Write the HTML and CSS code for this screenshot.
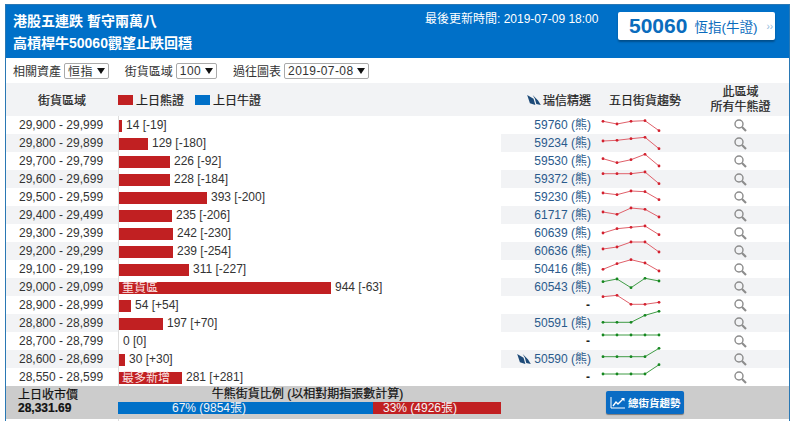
FILE: index.html
```html
<!DOCTYPE html>
<html lang="zh-Hant">
<head>
    <meta charset="UTF-8">
    <title>牛熊街貨圖</title>
    <link rel="stylesheet" href="styles.css">
</head>
<body>
    <svg class="defs" width="0" height="0">
        <defs>
            <marker id="dot-red" markerUnits="userSpaceOnUse" markerWidth="4" markerHeight="4" refX="2" refY="2"><circle cx="2" cy="2" r="1.4" fill="#d3202e"/></marker>
            <marker id="dot-green" markerUnits="userSpaceOnUse" markerWidth="4" markerHeight="4" refX="2" refY="2"><circle cx="2" cy="2" r="1.4" fill="#15871f"/></marker>
            <symbol id="sail" viewBox="0 0 15 11"><path d="M0 0 L7 4 L9 11 L3 9 Z M6 0 L12 6 L15 11 L10 10 L8.5 4 Z"/></symbol>
            <symbol id="lens" viewBox="0 0 13 13"><circle cx="5" cy="5" r="4" fill="none" stroke="#8c8c8c" stroke-width="1.4"/><path d="M8 8 L12 12" stroke="#8c8c8c" stroke-width="2.2"/></symbol>
        </defs>
    </svg>

    <div class="board">
        <div class="top">
            <h1 class="title">港股五連跌 暫守兩萬八<br>高槓桿牛50060觀望止跌回穩</h1>
            <div class="updated">最後更新時間: 2019-07-09 18:00</div>
            <a class="pick-btn"><b>50060</b><span class="pick-name">恆指(牛證)</span><span class="pick-more">››</span></a>
        </div>

        <div class="filters">
            <label>相關資產</label><span class="select">恒指</span>
            <label>街貨區域</label><span class="select">100</span>
            <label>過往圖表</label><span class="select">2019-07-08</span>
        </div>

        <div class="grid head">
            <div class="range-head">街貨區域</div>
            <div class="legend">
                <i class="swatch bear"></i>上日熊證
                <i class="swatch bull"></i>上日牛證
            </div>
            <div class="code-head"><svg class="sail" width="14" height="10"><use href="#sail"/></svg>瑞信精選</div>
            <div class="spark-head">五日街貨趨勢</div>
            <div class="all-head">此區域<br>所有牛熊證</div>
        </div>

        <div class="grid row">
            <div class="range">29,900 - 29,999</div>
            <div class="qty"><span class="bar" style="width:3px"></span>14 [-19]</div>
            <a class="code">59760 (熊)</a>
            <svg class="spark"><polyline class="down" points="3,5.3 17,8 31,5.3 45,4.7 59,14.7"/></svg>
            <svg class="lens"><use href="#lens"/></svg>
        </div>
        <div class="grid row">
            <div class="range">29,800 - 29,899</div>
            <div class="qty"><span class="bar" style="width:29px"></span>129 [-180]</div>
            <a class="code">59234 (熊)</a>
            <svg class="spark"><polyline class="down" points="3,7 17,6.3 31,4.7 45,3.3 59,14.7"/></svg>
            <svg class="lens"><use href="#lens"/></svg>
        </div>
        <div class="grid row">
            <div class="range">29,700 - 29,799</div>
            <div class="qty"><span class="bar" style="width:51px"></span>226 [-92]</div>
            <a class="code">59530 (熊)</a>
            <svg class="spark"><polyline class="down" points="3,6.7 17,10.7 31,7.7 45,2.3 59,14"/></svg>
            <svg class="lens"><use href="#lens"/></svg>
        </div>
        <div class="grid row">
            <div class="range">29,600 - 29,699</div>
            <div class="qty"><span class="bar" style="width:51px"></span>228 [-184]</div>
            <a class="code">59372 (熊)</a>
            <svg class="spark"><polyline class="down" points="3,3.7 17,3.7 31,3.7 45,2 59,13.7"/></svg>
            <svg class="lens"><use href="#lens"/></svg>
        </div>
        <div class="grid row">
            <div class="range">29,500 - 29,599</div>
            <div class="qty"><span class="bar" style="width:88px"></span>393 [-200]</div>
            <a class="code">59230 (熊)</a>
            <svg class="spark"><polyline class="down" points="3,5 17,6.7 31,3 45,3.7 59,11.7"/></svg>
            <svg class="lens"><use href="#lens"/></svg>
        </div>
        <div class="grid row">
            <div class="range">29,400 - 29,499</div>
            <div class="qty"><span class="bar" style="width:53px"></span>235 [-206]</div>
            <a class="code">61717 (熊)</a>
            <svg class="spark"><polyline class="down" points="3,6 17,8.3 31,2 45,3.3 59,11"/></svg>
            <svg class="lens"><use href="#lens"/></svg>
        </div>
        <div class="grid row">
            <div class="range">29,300 - 29,399</div>
            <div class="qty"><span class="bar" style="width:54px"></span>242 [-230]</div>
            <a class="code">60639 (熊)</a>
            <svg class="spark"><polyline class="down" points="3,9 17,4.7 31,3.3 45,2 59,10.7"/></svg>
            <svg class="lens"><use href="#lens"/></svg>
        </div>
        <div class="grid row">
            <div class="range">29,200 - 29,299</div>
            <div class="qty"><span class="bar" style="width:54px"></span>239 [-254]</div>
            <a class="code">60636 (熊)</a>
            <svg class="spark"><polyline class="down" points="3,7 17,5 31,0 45,0 59,10"/></svg>
            <svg class="lens"><use href="#lens"/></svg>
        </div>
        <div class="grid row">
            <div class="range">29,100 - 29,199</div>
            <div class="qty"><span class="bar" style="width:70px"></span>311 [-227]</div>
            <a class="code">50416 (熊)</a>
            <svg class="spark"><polyline class="down" points="3,9.3 17,3.7 31,-0.3 45,3 59,11"/></svg>
            <svg class="lens"><use href="#lens"/></svg>
        </div>
        <div class="grid row">
            <div class="range">29,000 - 29,099</div>
            <div class="qty"><span class="bar tag" style="width:212px">重貨區</span>944 [-63]</div>
            <a class="code">60543 (熊)</a>
            <svg class="spark"><polyline class="up" points="3,3.7 17,1 31,9.7 45,0.3 59,3"/></svg>
            <svg class="lens"><use href="#lens"/></svg>
        </div>
        <div class="grid row">
            <div class="range">28,900 - 28,999</div>
            <div class="qty"><span class="bar" style="width:12px"></span>54 [+54]</div>
            <a class="code none">-</a>
            <svg class="spark"><polyline class="down" points="3,0.7 17,-0.7 31,8.3 45,8.3 59,6.3"/></svg>
            <svg class="lens"><use href="#lens"/></svg>
        </div>
        <div class="grid row">
            <div class="range">28,800 - 28,899</div>
            <div class="qty"><span class="bar" style="width:44px"></span>197 [+70]</div>
            <a class="code">50591 (熊)</a>
            <svg class="spark"><polyline class="up" points="3,8.3 17,8.3 31,8.3 45,1.3 59,-2.7"/></svg>
            <svg class="lens"><use href="#lens"/></svg>
        </div>
        <div class="grid row">
            <div class="range">28,700 - 28,799</div>
            <div class="qty"><span class="bar" style="width:0"></span>0 [0]</div>
            <a class="code none">-</a>
            <svg class="spark"><polyline class="up" points="3,3 17,3 31,3 45,3 59,3"/></svg>
            <svg class="lens"><use href="#lens"/></svg>
        </div>
        <div class="grid row">
            <div class="range">28,600 - 28,699</div>
            <div class="qty"><span class="bar" style="width:6px"></span>30 [+30]</div>
            <a class="code"><svg class="sail" width="14" height="10"><use href="#sail"/></svg>50590 (熊)</a>
            <svg class="spark"><polyline class="up" points="3,6.7 17,6.7 31,6.7 45,6.7 59,-1.7"/></svg>
            <svg class="lens"><use href="#lens"/></svg>
        </div>
        <div class="grid row">
            <div class="range">28,550 - 28,599</div>
            <div class="qty"><span class="bar tag" style="width:63px">最多新增</span>281 [+281]</div>
            <a class="code none">-</a>
            <svg class="spark"><polyline class="up" points="3,6 17,6 31,6 45,6 59,-3.3"/></svg>
            <svg class="lens"><use href="#lens"/></svg>
        </div>

        <div class="grid foot">
            <div class="close">上日收市價<br><b>28,331.69</b></div>
            <div class="ratio">
                <div class="ratio-title">牛熊街貨比例 (以相對期指張數計算)</div>
                <div class="ratio-bar">
                    <span class="ratio-bull" style="width:255px">67% (9854張)</span>
                    <span class="ratio-bear" style="width:128px">33% (4926張)</span>
                </div>
            </div>
            <a class="trend-btn">
                <svg width="16" height="13" viewBox="0 0 16 13"><path d="M1 1 V12 H15" fill="none" stroke="#fff"/><path d="M3 10 L6 6 L8 8 L13 3" fill="none" stroke="#fff" stroke-width="1.4"/><path d="M11 2 H14.5 V5.5 Z" fill="#fff"/></svg>
                總街貨趨勢
            </a>
        </div>
        <div class="tail"></div>
    </div>
</body>
</html>
```

FILE: styles.css
```css
html, body {
    height: 100%;
    overflow: hidden;
}
body {
    margin: 0;
    background-color: #fff;
    color: #333;
    font-family: "Liberation Sans", "Noto Sans CJK TC", sans-serif;
    font-size: 12px;
}
.defs {
    display: block;
}
.board {
    width: 783px;
    margin: 4px 0 0 5px;
    border: 1px solid #2a78b4;
}

/* blue title bar */
.top {
    display: flex;
    height: 53px;
    background-color: #0070c8;
    color: #fff;
}
.title {
    width: 412px;
    margin: 5px 0 0 7px;
    font-size: 14px;
    line-height: 22px;
}
.updated {
    width: 193px;
    margin-top: 7px;
    line-height: 14px;
}
.pick-btn {
    display: flex;
    align-items: center;
    width: 157px;
    height: 28px;
    margin-top: 7px;
    border-radius: 2px;
    background-color: #fff;
    box-shadow: 0 2px 2px rgba(0,0,0,0.3);
    color: #0a6cbd;
}
.pick-btn b {
    margin-left: 11px;
    font-size: 21px;
}
.pick-name {
    margin-left: 7px;
    font-size: 13.5px;
}
.pick-more {
    margin-left: 9px;
    color: #8fb8dc;
    font-size: 10px;
}

/* filters */
.filters {
    display: flex;
    align-items: center;
    height: 25px;
    padding-left: 7px;
}
.select {
    display: inline-flex;
    align-items: center;
    height: 14px;
    margin: 0 16px 0 3px;
    padding: 0 3px;
    border: 1px solid #aaa;
    border-radius: 2px;
    letter-spacing: 0.4px;
}
.select::after {
    content: "";
    margin-left: 4px;
    border-top: 6px solid #111;
    border-left: 4px solid transparent;
    border-right: 4px solid transparent;
}

/* shared columns */
.grid {
    display: grid;
    grid-template-columns: 113px 382px 91px 100px 97px;
}

.head {
    height: 33px;
    align-items: center;
    background-color: #f2f3f5;
    color: #222;
    -webkit-text-stroke: 0.2px #222;
}
.range-head {
    padding-left: 32px;
}
.legend {
    display: flex;
    align-items: center;
    margin-left: -1px;
}
.swatch {
    width: 15px;
    height: 10px;
    margin-right: 3px;
}
.swatch.bear {
    background-color: #c12022;
}
.swatch.bull {
    margin-left: 11px;
    background-color: #0070c8;
}
.code-head {
    display: flex;
    align-items: center;
    justify-content: flex-end;
    padding-right: 1px;
}
.code-head .sail {
    margin-right: 2px;
}
.spark-head {
    padding-left: 17px;
}
.all-head {
    text-align: center;
    line-height: 15px;
}
.sail {
    fill: #1d4a78;
}

/* data rows */
.row {
    height: 18px;
    align-items: center;
}
.row:nth-of-type(odd) {
    background-color: #f2f3f5;
}
.range {
    height: 18px;
    padding-left: 13px;
    border-right: 1px solid #ddd;
    line-height: 18px;
}
.qty {
    display: flex;
    align-items: center;
    height: 18px;
    background-color: #fff;
}
.bar {
    height: 12px;
    margin: 2px 4px 0 0;
    background-color: #c12022;
    color: #fbe3e3;
    line-height: 12px;
    white-space: nowrap;
}
.bar.tag {
    padding-left: 3px;
    box-sizing: border-box;
}
.code {
    display: flex;
    align-items: center;
    justify-content: flex-end;
    height: 18px;
    padding: 0 1px 1px 0;
    box-sizing: border-box;
    color: #2a5a8c;
    line-height: 14px;
}
.code.none {
    padding: 0 2px 0 0;
    color: #222;
    font-weight: bold;
}
.code .sail {
    margin-right: 3px;
}
.spark {
    width: 100px;
    height: 18px;
    padding-left: 8px;
    box-sizing: border-box;
    overflow: visible;
}
.spark polyline {
    fill: none;
    stroke-width: 1;
}
.spark .down {
    stroke: #e0606a;
    marker: url(#dot-red);
}
.spark .up {
    stroke: #3f9c45;
    marker: url(#dot-green);
}
.lens {
    width: 13px;
    height: 13px;
    justify-self: center;
}

/* grey summary bar */
.foot {
    height: 33px;
    background-color: #ccc;
    color: #111;
}
.close {
    padding: 3px 0 0 12px;
    line-height: 13px;
    -webkit-text-stroke: 0.2px #111;
}
.ratio {
    margin-left: -1px;
    text-align: center;
}
.ratio-title {
    height: 16px;
    padding-right: 4px;
    line-height: 17px;
    -webkit-text-stroke: 0.2px #111;
}
.ratio-bar {
    display: flex;
    width: 383px;
    height: 12px;
    color: #f4f4f4;
    line-height: 12px;
    text-align: left;
}
.ratio-bull {
    padding-left: 54px;
    box-sizing: border-box;
    background-color: #0070c8;
}
.ratio-bear {
    padding-left: 10px;
    box-sizing: border-box;
    background-color: #c12022;
}
.trend-btn {
    grid-column: 3 / span 2;
    display: flex;
    align-items: center;
    gap: 2px;
    width: 78px;
    height: 23px;
    margin: 5px 0 0 105px;
    padding-left: 4px;
    box-sizing: border-box;
    border-radius: 2px;
    background-color: #0a6cc4;
    box-shadow: 0 1px 1px rgba(0,0,0,0.4);
    color: #fff;
    font-size: 10.5px;
    font-weight: bold;
    white-space: nowrap;
}

.tail {
    height: 10px;
    width: 112px;
    border-right: 1px solid #ddd;
}
```
